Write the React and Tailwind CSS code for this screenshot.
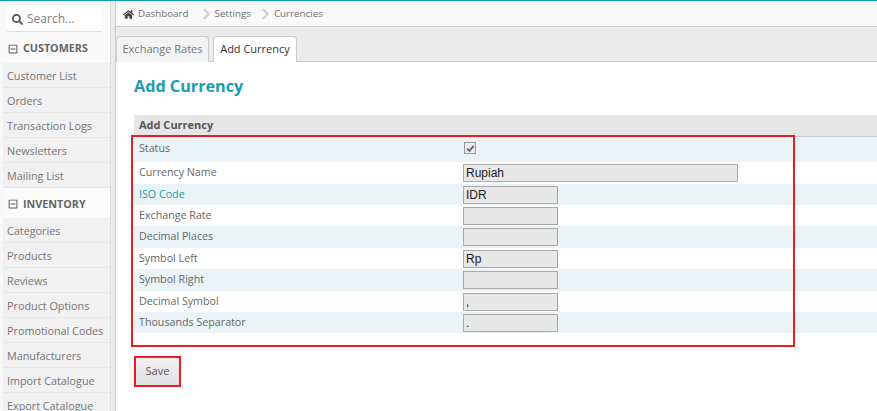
import React from "react";
import { FaHome, FaSearch, FaRegMinusSquare } from "react-icons/fa";

const customers = ["Customer List", "Orders", "Transaction Logs", "Newsletters", "Mailing List"];
const inventory = ["Categories", "Products", "Reviews", "Product Options", "Promotional Codes", "Manufacturers", "Import Catalogue", "Export Catalogue"];

const rows = [
  { label: "Status", h: "h-[25px]", pad: "pb-[3px]", check: true },
  { label: "Currency Name", h: "h-[22px]", pad: "pb-[1px]", value: "Rupiah", wide: true },
  { label: "ISO Code", h: "h-[21px]", pad: "pb-[1px]", value: "IDR", link: true },
  { label: "Exchange Rate", h: "h-[21px]", pad: "pb-[1px]", value: "" },
  { label: "Decimal Places", h: "h-[22px]", pad: "pb-[1px]", value: "" },
  { label: "Symbol Left", h: "h-[21px]", pad: "pb-[1px]", value: "Rp" },
  { label: "Symbol Right", h: "h-[22px]", pad: "pb-[1px]", value: "" },
  { label: "Decimal Symbol", h: "h-[21px]", pad: "pb-[1px]", value: "," },
  { label: "Thousands Separator", h: "h-[21px]", pad: "pb-[1px]", value: "." },
];

function SideItem({ label }) {
  return (
    <div className="h-[25px] shrink-0 ml-[3px] pl-1 pt-[2px] flex items-center bg-[#f1f1f1] border-b border-[#e6e6e6] text-[10.8px] text-[#757575]">
      {label}
    </div>
  );
}

function SideHead({ label, className }) {
  return (
    <div className={`shrink-0 ml-[3px] pl-[5px] pt-[2px] flex items-center gap-[5px] font-bold text-[10.75px] text-[#666666] ${className}`}>
      <FaRegMinusSquare className="text-[10px] text-[#555555]" />
      {label}
    </div>
  );
}

function Crumb({ className }) {
  return (
    <svg width="7" height="12" viewBox="0 0 7 12" className={`mr-[5px] ${className}`}>
      <path d="M1 1l4.5 5-4.5 5" fill="none" stroke="#d2d2d2" strokeWidth="2.4" />
    </svg>
  );
}

export default function App() {
  return (
    <div className="w-[877px] h-[411px] overflow-hidden bg-white flex flex-col font-['Open_Sans',sans-serif]">
      <div className="h-px shrink-0 bg-[#129fb2]" />
      <div className="flex flex-1 min-h-0">
        <aside className="w-[111px] shrink-0 bg-[#f9f9f9] border-r border-[#dddddd] flex flex-col overflow-hidden">
          <div className="mt-1 ml-[7px] w-[95px] h-[27px] shrink-0 bg-white border-b border-[#dddddd] flex items-center pl-[5px] pt-[2px] gap-[4px] text-[12px] text-[#808080]">
            <FaSearch className="text-[11px] text-[#555555]" />
            Search...
          </div>
          <SideHead label="CUSTOMERS" className="h-[31px]" />
          {customers.map((c) => <SideItem key={c} label={c} />)}
          <SideHead label="INVENTORY" className="h-[30px] bg-[#fbfbfb]" />
          {inventory.map((c) => <SideItem key={c} label={c} />)}
        </aside>
        <div className="w-[4px] shrink-0 bg-[#ebebeb]" />
        <main className="flex-1 min-w-0 border-l border-[#cccccc] flex flex-col">
          <div className="h-[26px] shrink-0 bg-[#f9f9f9] border-b border-[#cccccc] flex items-center pl-[7px] pt-[1px] text-[9.8px] text-[#707070]">
            <FaHome className="text-[11px] text-[#444444] mr-[4px]" />
            <span>Dashboard</span>
            <Crumb className="ml-[14px]" />
            <span>Settings</span>
            <Crumb className="ml-[11px]" />
            <span>Currencies</span>
          </div>
          <div className="h-[35px] shrink-0 bg-[#ebebeb] border-b border-[#cccccc] flex items-end gap-[4px]">
            <div className="h-[26px] -mb-px w-[93px] flex items-center justify-center bg-[#f2f4f4] border border-b-0 border-[#cccccc] rounded-t text-[11px] text-[#777777]">
              Exchange Rates
            </div>
            <div className="h-[26px] -mb-px w-[84px] flex items-center justify-center bg-white border border-b-0 border-[#cccccc] rounded-t text-[11px] text-[#333333]">
              Add Currency
            </div>
          </div>
          <div className="flex-1 relative pl-[18px] min-h-0">
            <h1 className="h-[53px] flex items-center text-[16.2px] font-bold text-[#1a9cb2] leading-none pb-[5px]">Add Currency</h1>
            <div className="h-[22px] bg-[#e6e6e6] border-b border-[#c8c8c8] pl-[5px] flex items-center font-bold text-[11px] text-[#555555]">
              Add Currency
            </div>
            {rows.map((r, i) => (
              <div key={r.label} className={`${r.h} flex items-center ${i % 2 === 0 ? "bg-[#eaf3f6]" : "bg-white"}`}>
                <div className={`w-[329px] pl-[5px] text-[10.7px] shrink-0 ${r.pad} ${r.link ? "text-[#1a9cb2]" : "text-[#666666]"}`}>{r.label}</div>
                {r.check ? (
                  <div className="ml-[1px] mb-[3px] w-[12px] h-[12px] bg-[#ebebeb] border border-[#9a9a9a] flex items-center justify-center">
                    <svg width="9" height="9" viewBox="0 0 9 9">
                      <path d="M1.2 4.6l2.2 2.3 4.3-5" fill="none" stroke="#666666" strokeWidth="1.8" />
                    </svg>
                  </div>
                ) : (
                  <div className={`${r.wide ? "w-[275px]" : "w-[95px]"} h-[18px] bg-[#e8e8e8] border border-[#a9a9a9] pl-[2px] flex items-center font-['Liberation_Sans',sans-serif] text-[12px] leading-none text-[#222222]`}>
                    {r.value}
                  </div>
                )}
              </div>
            ))}
            <div className="mt-[25px] ml-[2px] w-[43px] h-[27px] flex items-center justify-center text-[11px] text-[#555555] bg-gradient-to-b from-[#f0f0f0] to-[#e0e0e0]">
              Save
            </div>
            {/* annotation boxes */}
            <div className="absolute left-[15px] top-[73px] w-[664px] h-[212px] border-2 border-[#ed1c24] pointer-events-none" />
            <div className="absolute left-[18px] top-[294px] w-[47px] h-[31px] border-2 border-[#ed1c24] pointer-events-none" />
          </div>
        </main>
      </div>
    </div>
  );
}
